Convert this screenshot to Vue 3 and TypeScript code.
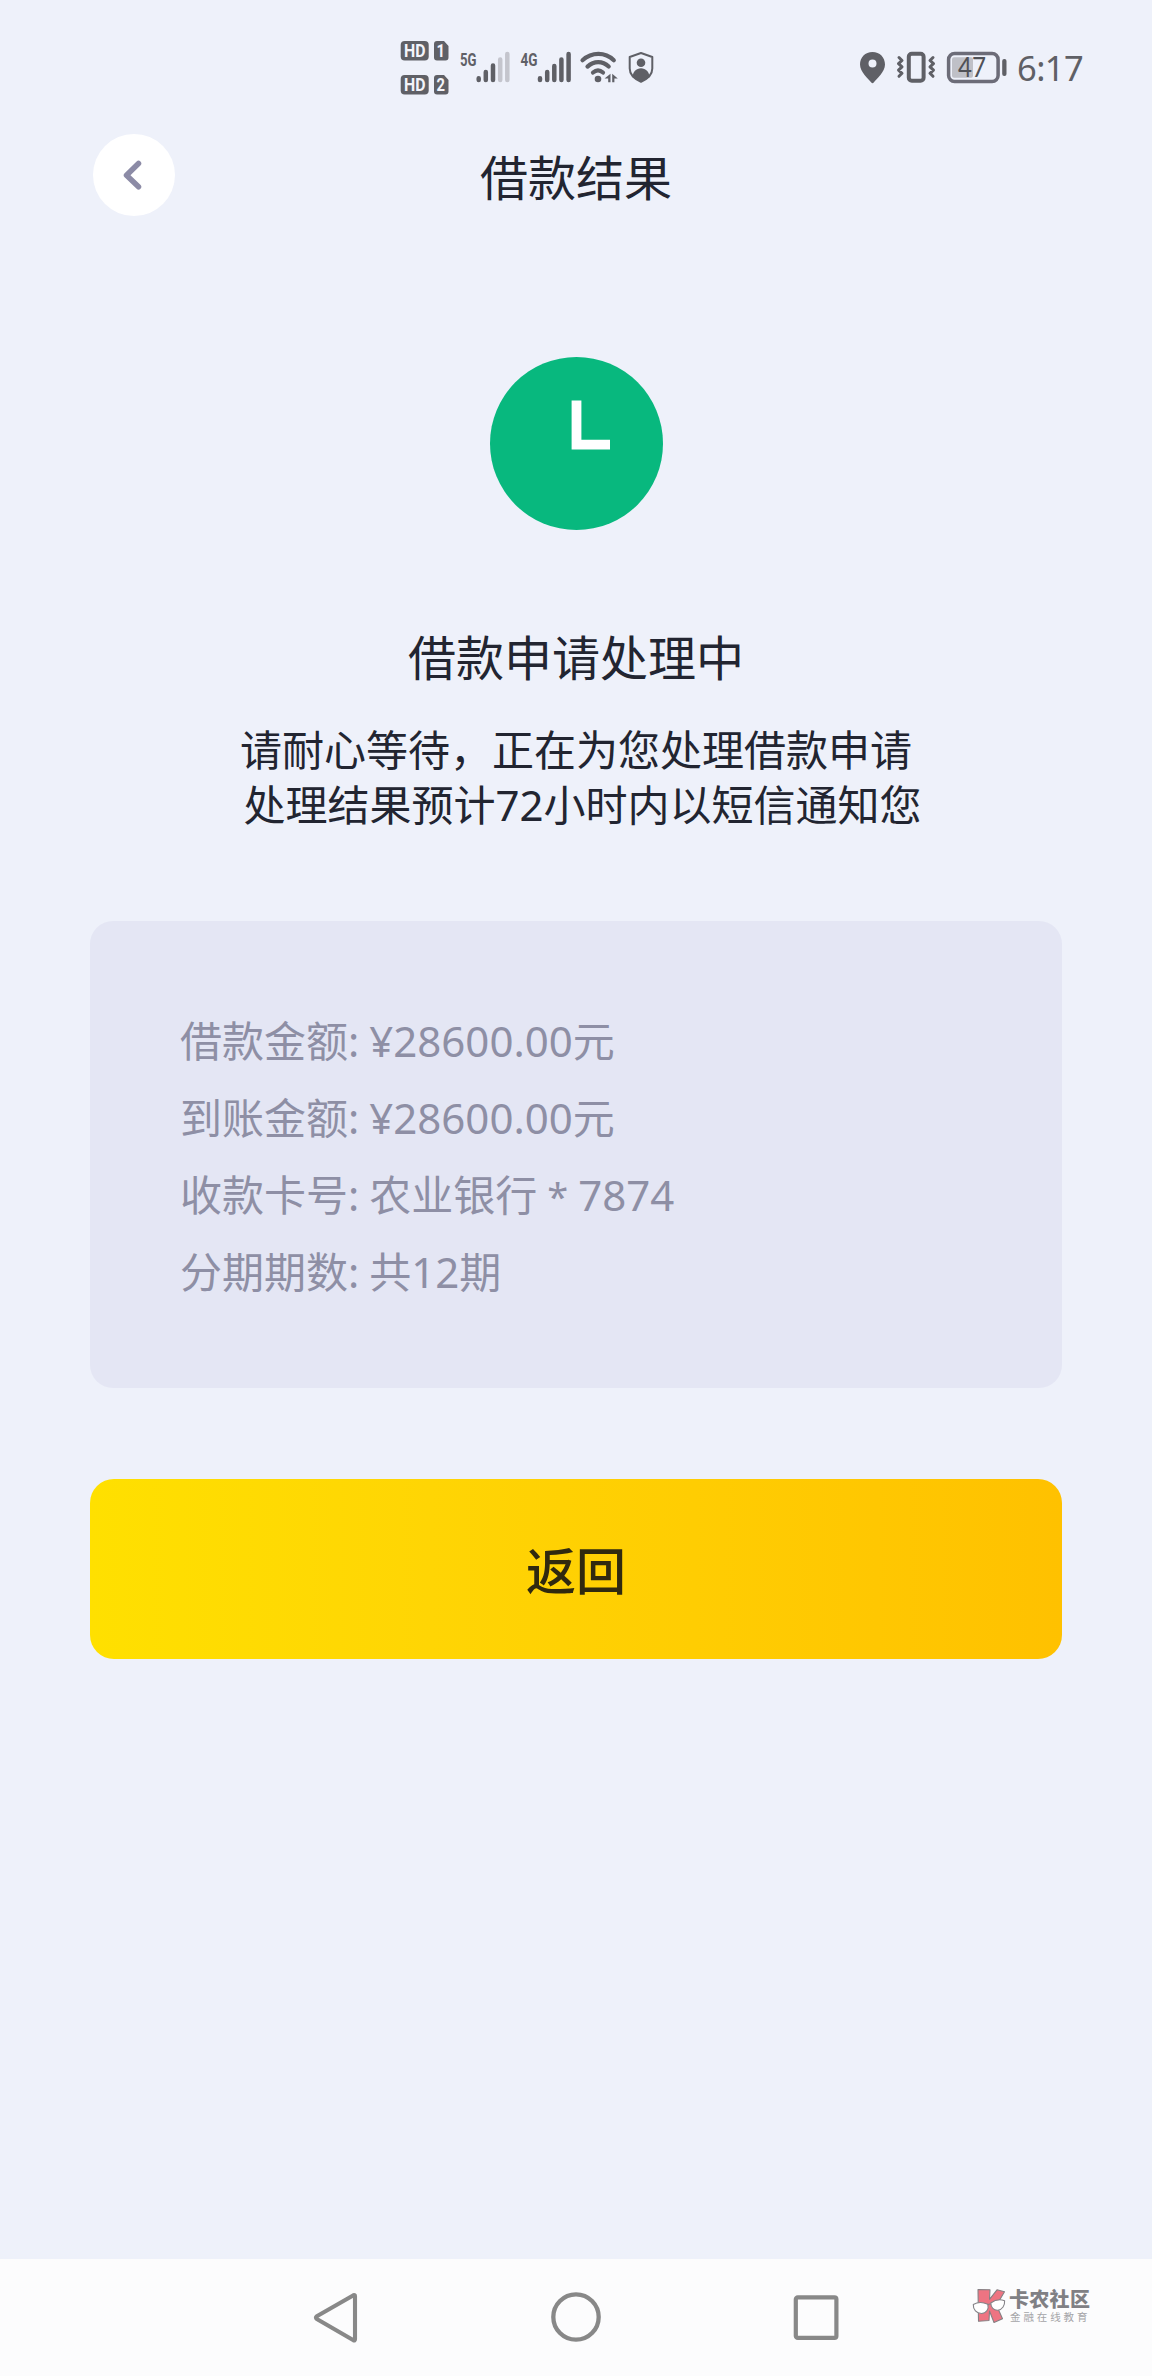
<script setup lang="ts">
interface DetailRow {
  label: string
  before?: string
  mask?: string
  value: string
  after?: string
}

const rows: DetailRow[] = [
  { label: '借款金额', value: '¥28600.00', after: '元' },
  { label: '到账金额', value: '¥28600.00', after: '元' },
  { label: '收款卡号', before: '农业银行', mask: ' * ', value: '7874' },
  { label: '分期期数', before: '共', value: '12', after: '期' },
]
</script>

<template>
  <div class="screen">
    <header class="status">
      <svg class="status-left" viewBox="396 36 264 64" width="264" height="64">
        <g fill="#5f6066">
          <rect x="400.7" y="41" width="28" height="19.5" rx="4" />
          <path d="M437 41h7l4.5 5v11.5a3 3 0 0 1-3 3H437a3 3 0 0 1-3-3V44a3 3 0 0 1 3-3z" />
          <rect x="400.7" y="75" width="28" height="19.5" rx="4" />
          <path d="M437 75h7l4.5 5v11.5a3 3 0 0 1-3 3H437a3 3 0 0 1-3-3V78a3 3 0 0 1 3-3z" />
        </g>
        <g class="badge" fill="#f3f4fa">
          <text x="404" y="57" textLength="21.5" lengthAdjust="spacingAndGlyphs">HD</text>
          <text x="404" y="91" textLength="21.5" lengthAdjust="spacingAndGlyphs">HD</text>
          <text x="436.6" y="57" textLength="8.5" lengthAdjust="spacingAndGlyphs">1</text>
          <text x="436.6" y="91" textLength="8.5" lengthAdjust="spacingAndGlyphs">2</text>
        </g>
        <g class="net" fill="#5f6066">
          <text x="460" y="65.5" textLength="16.5" lengthAdjust="spacingAndGlyphs">5G</text>
          <text x="520.5" y="65.5" textLength="17" lengthAdjust="spacingAndGlyphs">4G</text>
        </g>
        <g fill="none" stroke="#5f6066" stroke-width="4.5" stroke-linecap="round">
          <path d="M478.7 78.3v1.7M485.8 72v8M493 65.5v14.5" />
          <path stroke="#c4c5cd" d="M500.2 59.5v20.5M507.3 54v26" />
          <path d="M540 78.3v1.7M547.2 72v8M554.3 66v14M561.4 59.5v20.5M568.6 54v26" />
          <path stroke-width="4.2" d="M582.5 60.2C592 51.8 605 51.8 613.8 60.2M587.5 66.6C594 60.6 602.5 60.6 608.7 66.6M593 72.5c3.2-2.8 6.8-2.8 10 0" />
        </g>
        <g fill="#5f6066">
          <circle cx="598" cy="79" r="3.3" />
          <path d="M610.5 73.8v8.4h-2.3v-3.6h-3.7zM612.2 82.2v-8.4l5.6 4.6h-3.4v3.8z" />
          <circle cx="641" cy="62.8" r="4.3" />
          <path d="M632.6 77.2c0-5.5 3.7-9 8.4-9s8.4 3.5 8.4 9L641 82z" />
          <path d="M641 53l11.3 4v11.5c0 6.5-5 10.5-11.3 13.3-6.3-2.8-11.3-6.8-11.3-13.3V57z" fill="none" stroke="#5f6066" stroke-width="2" stroke-linejoin="round" />
        </g>
      </svg>
      <div class="status-right">
        <svg viewBox="856 48 154 38" width="154" height="38">
          <path fill="#5f6066" fill-rule="evenodd" d="M872.5 52c7.3 0 12.5 5.3 12.5 12.5 0 7.5-8.5 14.5-11.3 18a1.6 1.6 0 0 1-2.4 0C868.5 79 860 72 860 64.5 860 57.3 865.2 52 872.5 52zm0 7.5a4 4 0 1 0 0 8 4 4 0 0 0 0-8z" />
          <g fill="none" stroke="#5f6066" stroke-width="4">
            <rect x="908.8" y="53.7" width="14.8" height="27" rx="3" />
            <path stroke-width="3" stroke-linejoin="round" stroke-linecap="round" d="M899 57.5l3 3-3.5 3.2 3.5 3.2-3.5 3.2 3.5 3.2-3 3M933 57.5l-3 3 3.5 3.2-3.5 3.2 3.5 3.2-3.5 3.2 3 3" />
            <rect x="948.6" y="53.5" width="49.5" height="28" rx="6" stroke="#6c6c78" stroke-width="3.5" />
          </g>
          <rect x="952" y="57.3" width="21" height="20.5" rx="2" fill="#bfc0c7" />
          <rect x="1002.2" y="59" width="4.3" height="17" rx="2" fill="#5f6066" />
          <text class="charge" x="958" y="77" fill="#505157" textLength="28" lengthAdjust="spacingAndGlyphs">47</text>
        </svg>
        <span class="time">6:17</span>
      </div>
    </header>

    <nav class="top">
      <button class="back" aria-label="返回">
        <svg viewBox="0 0 82 82" width="82" height="82"><path d="M45.5 29.5L33.5 41.3l12 11.5" fill="none" stroke="#8c8ba6" stroke-width="5.5" stroke-linecap="round" stroke-linejoin="round" /></svg>
      </button>
      <h1>借款结果</h1>
      <span class="side"></span>
    </nav>

    <main>
      <svg class="clock" viewBox="0 0 173 173" width="173" height="173">
        <circle cx="86.5" cy="86.5" r="86.5" fill="#08b87e" />
        <path d="M86.5 43.5v44.2h33.5" fill="none" stroke="#fff" stroke-width="9.8" />
      </svg>
      <h2>借款申请处理中</h2>
      <p class="hint">请耐心等待，正在为您处理借款申请</p>
      <p class="hint second">处理结果预计72小时内以短信通知您</p>

      <section class="card">
        <div v-for="row in rows" :key="row.label" class="row">
          <span>{{ row.label }}:</span>
          <span>{{ row.before }}<span v-if="row.mask" class="mask">{{ row.mask }}</span>{{ row.value }}{{ row.after }}</span>
        </div>
      </section>

      <button class="submit">返回</button>
    </main>

    <footer>
      <svg viewBox="0 0 52 56" width="52" height="56"><path d="M43.5 5.2L6.8 26.2c-1.2.8-1.2 2 0 2.8L43.5 50.3c1 .5 1.5 0 1.5-1V6.2c0-1-.5-1.5-1.500-1z" fill="none" stroke="#888" stroke-width="4.1" stroke-linejoin="round" /></svg>
      <svg viewBox="0 0 52 56" width="52" height="56"><circle cx="26" cy="27" r="22.7" fill="none" stroke="#888" stroke-width="4.3" /></svg>
      <svg viewBox="0 0 52 56" width="52" height="56"><rect x="5.8" y="7.3" width="40.6" height="40.6" rx="2" fill="none" stroke="#888" stroke-width="4.2" /></svg>
      <div class="brand">
        <svg viewBox="0 0 34 36" width="34" height="36">
          <g fill="#ee7482" stroke="#858084" stroke-width="1.1" stroke-linejoin="round">
            <path d="M6 1.5l12 .3-.5 9.5L25 1.8l7.5 2-8 13.5 6 13.5L22 34.5 17.5 23l-.5 9.500-10.500.7z" />
          </g>
          <g fill="#fff" stroke="#858388" stroke-width="1.1">
            <path d="M1.3 16.5c4-2.3 10-2.3 14.5-.2 1.3 4.5-1.3 9-6.3 9.2-5 0-8.5-4-8.200-9z" />
            <path d="M18.8 15c4-3 9.5-4 13.8-2.2.4 4.5-2.2 9-6.8 9.4-4 .2-7-2.7-7-7.200z" />
            <path d="M15.8 17q1.5-1.5 3-.7" fill="none" />
          </g>
        </svg>
        <div class="brand-text">
          <strong>卡农社区</strong>
          <small>金融在线教育</small>
        </div>
      </div>
    </footer>
  </div>
</template>

<style>
body {
  margin: 0;
  background: #eef1fa;
}
</style>

<style scoped>
.screen {
  display: flex;
  flex-direction: column;
  width: 1152px;
  height: 2376px;
  overflow: hidden;
  background: #eef1fa;
  color: #222531;
  font-family: 'Noto Sans', 'Noto Sans CJK SC', sans-serif;
}

.status {
  display: flex;
  justify-content: space-between;
  align-items: flex-start;
  height: 134px;
  padding: 36px 68px 0 396px;
  box-sizing: border-box;
}

.badge {
  font: 700 17.5px 'Roboto', sans-serif;
}

.net {
  font: 700 19px 'Roboto', sans-serif;
}

.charge {
  font: 400 27px 'Lato', sans-serif;
}

.status-right {
  display: flex;
  align-items: flex-start;
  padding-top: 12px;
}

.time {
  margin-left: 7px;
  width: 67px;
  color: #5f6066;
  font-size: 34.5px;
  letter-spacing: -0.6px;
  line-height: 40px;
  white-space: nowrap;
}

.top {
  display: flex;
  justify-content: space-between;
  height: 82px;
  padding: 0 93px;
}

.back {
  width: 82px;
  height: 82px;
  padding: 0;
  border: 0;
  border-radius: 50%;
  background: #fff;
}

.back svg {
  display: block;
}

.side {
  width: 82px;
}

h1,
h2 {
  margin: 0;
  font-size: 48px;
  font-weight: 400;
  line-height: 72px;
}

h1 {
  padding-top: 8px;
}

main {
  display: flex;
  flex: 1;
  flex-direction: column;
  align-items: center;
  padding: 141px 90px 0;
}

h2 {
  margin-top: 92px;
}

.hint {
  margin: 28px 0 0;
  font-size: 42px;
  line-height: 55px;
}

.hint.second {
  margin: 0;
  padding-left: 13px;
}

.card {
  width: 100%;
  height: 467px;
  margin-top: 89px;
  padding: 81px 90px 0;
  box-sizing: border-box;
  border-radius: 23px;
  background: #e4e6f4;
  color: #8e8fa5;
}

.row {
  display: flex;
  gap: 10px;
  height: 77px;
  font-size: 42px;
  line-height: 77px;
  white-space: pre;
}

.mask {
  display: inline-block;
  width: 41px;
  font-size: 38px;
  line-height: 50px;
  text-align: center;
  vertical-align: 0;
}

.submit {
  width: 100%;
  height: 180px;
  margin-top: 91px;
  padding: 0 0 2px;
  border: 0;
  border-radius: 24px;
  background: linear-gradient(90deg, #ffe000, #ffd504 35%, #ffcd02 62%, #ffc100);
  color: #30290f;
  font: 500 50px/70px 'Noto Sans CJK SC', sans-serif;
}

footer {
  display: flex;
  align-items: flex-start;
  height: 117px;
  padding: 31px 0 0 310px;
  box-sizing: border-box;
  background: #fcfcfd;
}

footer > svg {
  flex: none;
  margin-right: 188px;
}

.brand {
  display: flex;
  gap: 3px;
  margin: -2px 0 0 -58px;
}

.brand-text {
  display: flex;
  flex-direction: column;
  color: #808084;
  font-family: 'Noto Sans CJK SC', sans-serif;
  white-space: nowrap;
}

.brand-text strong {
  font-size: 20px;
  font-weight: 900;
  line-height: 21px;
  letter-spacing: 0.3px;
}

.brand-text small {
  margin: 2px 0 0 1px;
  color: #a5a5a8;
  font-size: 10.5px;
  line-height: 12px;
  letter-spacing: 2.9px;
}
</style>
